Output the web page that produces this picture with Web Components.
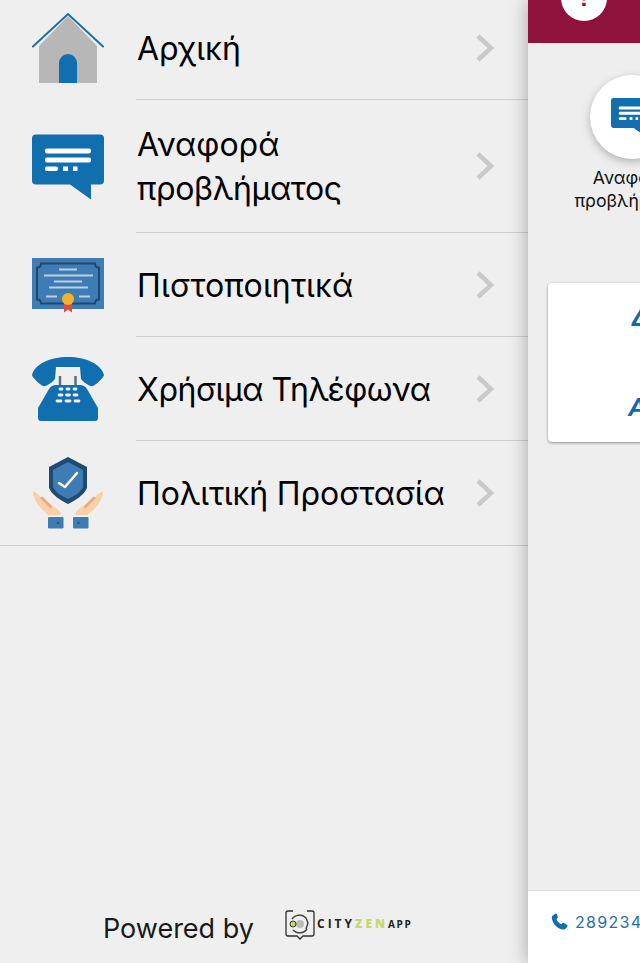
<!DOCTYPE html>
<html lang="el">
<head>
<meta charset="utf-8">
<title>Μενού</title>
<style>
html, body { margin: 0; height: 100%; overflow: hidden; background: #eee; }
body { font-family: Inter, "Liberation Sans", sans-serif; }
</style>
</head>
<body>
<app-shell>
  <side-drawer slot="drawer">
    <menu-item><app-icon slot="icon" name="house"></app-icon>Αρχική</menu-item>
    <menu-item><app-icon slot="icon" name="speech"></app-icon>Αναφορά<br><span style="letter-spacing:-.35px">προβλήματος</span></menu-item>
    <menu-item><app-icon slot="icon" name="cert"></app-icon><span style="letter-spacing:.15px">Πιστοποιητικά</span></menu-item>
    <menu-item><app-icon slot="icon" name="phone"></app-icon><span style="letter-spacing:-.45px">Χρήσιμα Τηλέφωνα</span></menu-item>
    <menu-item full><app-icon slot="icon" name="shield"></app-icon><span style="letter-spacing:-.1px">Πολιτική Προστασία</span></menu-item>
    <powered-by slot="footer"></powered-by>
  </side-drawer>
  <main-panel slot="panel">
    <quick-tile>
      <app-icon slot="icon" name="speech" size="43"></app-icon>
      Αναφορά<br>προβλήματος
    </quick-tile>
    <info-card></info-card>
  </main-panel>
</app-shell>

<script>
"use strict";

// icon viewBoxes are in page pixels, it made them easier to measure off the screenshot
const ICONS = {
  house: `<svg viewBox="32 12 72 72">
    <path fill="#b7b7b7" d="M39 46 68 16l29 30v37H39z"/>
    <path fill="#116eaf" d="M59 83V63a9 9 0 0 1 18 0v20z"/>
    <path fill="none" stroke="#1f6da3" stroke-width="2" stroke-linecap="round" d="M33 46.500 68 14l35 32.500"/>
  </svg>`,
  speech: `<svg viewBox="32 130.500 72 72">
    <path fill="#116eaf" d="M36 134h64a4 4 0 0 1 4 4v42a4 4 0 0 1-4 4h-9v15l-21-15H36a4 4 0 0 1-4-4v-42a4 4 0 0 1 4-4z"/>
    <g fill="#fff">
      <rect x="45" y="148" width="46" height="5" rx="2"/>
      <rect x="45" y="157" width="46" height="5" rx="2"/>
      <rect x="45" y="166" width="13" height="4.500" rx="2"/>
      <rect x="63" y="166" width="5" height="4.500"/>
      <rect x="73" y="166" width="4.500" height="4.500"/>
    </g>
  </svg>`,
  cert: `<svg viewBox="32 248.500 72 72">
    <rect x="32" y="257.500" width="72" height="51" fill="#3f7cb4"/>
    <path fill="none" stroke="#1c4970" stroke-width="2" d="M41 263h54q0 4 4 4v32q-4 0-4 4H41q0-4-4-4v-32q4 0 4-4z"/>
    <g stroke="#b9cfe3" stroke-width="2">
      <path d="M59 269h18M44 275h49M54 281h28M49 287h39M46 296h11M79 296h11"/>
    </g>
    <path fill="#dc4c3f" d="M64 303h8v9l-4-3-4 3z"/>
    <circle cx="68" cy="298.500" r="6" fill="#f6b02c"/>
  </svg>`,
  phone: `<svg viewBox="32 353 72 72">
    <path fill="#116eaf" d="M32 375c3-11 18-18 36-18s33 7 36 18c0 2-7 9-11 11-3 1-10-4-12-7l-1-12H56l-1 12c-2 3-9 8-12 7-4-2-11-9-11-11z"/>
    <path stroke="#5d6f7e" stroke-width="2.500" d="M60 376v10M75.500 376v10"/>
    <path fill="#116eaf" d="M56 385h24c3 0 5 1 7 4l11 19v10c0 2-1 3-3 3H41c-2 0-3-1-3-3v-10l11-19c2-3 4-4 7-4z"/>
    <g stroke="#efefef" stroke-width="2.800" stroke-linecap="round">
      <path d="M60 389h2M67 389h2M74 389h2M59 395h3M66.500 395h3M74 395h3M57 401h4M66 401h4M75 401h4"/>
    </g>
  </svg>`,
  shield: `<svg viewBox="32 457 72 72">
    <path fill="#f8d0a8" d="M33 491c6 3 9 8 14 12 6 3 13 6 14 12H48c-2-3-6-5-8-8-4-5-7-10-7-16zM103 491c-6 3-9 8-14 12-6 3-13 6-14 12h13c2-3 6-5 8-8 4-5 7-10 7-16z"/>
    <path stroke="#eea581" stroke-width="2.500" stroke-linecap="round" d="M42 498l9 9M94 498l-9 9"/>
    <rect x="48" y="517" width="15.500" height="11.500" rx="1" fill="#3f7cb4"/>
    <rect x="73" y="517" width="15.500" height="11.500" rx="1" fill="#3f7cb4"/>
    <circle cx="58" cy="523" r="1" fill="#1c4970"/><circle cx="78.500" cy="523" r="1" fill="#1c4970"/>
    <path fill="#1f4a72" d="M68 457l19 10v21c-3 7-11 12-19 16-8-4-16-9-19-16v-21z"/>
    <path fill="#3f7cb4" d="M68 462l15 8v17c-3 6-9 9-15 12-6-3-12-6-15-12v-17z"/>
    <path fill="none" stroke="#fff" stroke-width="2.500" stroke-linecap="round" stroke-linejoin="round" d="M59 483l6 4 12-14"/>
  </svg>`,
};

class AppIcon extends HTMLElement {
  constructor() {
    super();
    this.attachShadow({ mode: "open" });
  }

  connectedCallback() {
    const size = this.getAttribute("size") || 72;
    this.shadowRoot.innerHTML = `
<style>
:host { display: block; width: ${size}px; height: ${size}px; }
svg { display: block; width: 100%; height: 100%; }
</style>
${ICONS[this.getAttribute("name")] || ""}`;
  }
}
customElements.define("app-icon", AppIcon);

class AppShell extends HTMLElement {
  constructor() {
    super();
    this.attachShadow({ mode: "open" }).innerHTML = `
<style>
:host { display: flex; width: 640px; height: 963px; overflow: hidden; }
::slotted([slot=drawer]) { flex: 0 0 528px; }
::slotted([slot=panel]) { flex: 0 0 112px; }
</style>
<slot name="drawer"></slot>
<slot name="panel"></slot>`;
  }
}
customElements.define("app-shell", AppShell);

class SideDrawer extends HTMLElement {
  constructor() {
    super();
    this.attachShadow({ mode: "open" }).innerHTML = `
<style>
:host { display: flex; flex-direction: column; background: #efefef; height: 963px; overflow: hidden; }
#list { margin-top: -4px; display: flex; flex-direction: column; }
#foot { margin-top: auto; }
</style>
<div id="list"><slot></slot></div>
<div id="foot"><slot name="footer"></slot></div>`;
  }
}
customElements.define("side-drawer", SideDrawer);

class MenuItem extends HTMLElement {
  constructor() {
    super();
    this.attachShadow({ mode: "open" }).innerHTML = `
<style>
:host { display: flex; color: #000; font-size: 32px; line-height: 44px; }
:host([full]) { border-bottom: 1px solid #cfcfcf; }
#icon { flex: 0 0 136px; display: flex; align-items: center; justify-content: center; }
#row { flex: 1; display: flex; align-items: center; min-height: 104px; padding: 23px 0 21px; box-sizing: border-box; border-bottom: 1px solid #cfcfcf; }
:host([full]) #row { border-bottom: 0; }
#label { flex: 1; padding-left: 1px; }
svg { flex: none; width: 20px; height: 30px; margin: -2px 33px 0 0; }
</style>
<div id="icon"><slot name="icon"></slot></div>
<div id="row">
  <div id="label"><slot></slot></div>
  <svg viewBox="0 0 20 30"><path d="M3 3l13 12L3 27" fill="none" stroke="#c9c9c9" stroke-width="4.500"/></svg>
</div>`;
  }
}
customElements.define("menu-item", MenuItem);

class PoweredBy extends HTMLElement {
  constructor() {
    super();
    this.attachShadow({ mode: "open" }).innerHTML = `
<style>
:host { display: flex; align-items: center; height: 76px; padding: 6px 0 0 103px; box-sizing: border-box; }
#by { font-size: 27px; color: #1a1a1a; width: 181px; flex: none; }
#logo { display: flex; align-items: center; margin-top: -6px; }
svg { width: 32px; height: 34px; flex: none; }
#name { font: 700 12px "Open Sans", sans-serif; letter-spacing: 3px; color: #222; margin: 0 0 3px 1px; white-space: nowrap; }
#name b { color: #c6d86c; }
#name small { font-size: 10px; letter-spacing: 1.700px; }
</style>
<span id="by">Powered by</span>
<div id="logo">
  <svg viewBox="0 0 32 34">
    <path fill="none" stroke="#2e2e2e" stroke-width="1.300" d="M9 3H4Q2 3 2 5v21q0 2 2 2h9l3 3 3-3h9q2 0 2-2V5q0-2-2-2h-5"/>
    <path fill="none" stroke="#444" stroke-width="1.500" d="M8 11a9 9 0 0 1 14-1M23 21a9 9 0 0 1-14 1"/>
    <path fill="none" stroke="#444" stroke-width="1.500" d="M22 10l2 5-2 6"/>
    <circle cx="16" cy="16" r="4" fill="#bbb"/>
    <circle cx="9" cy="16" r="3" fill="#c6d86c" stroke="#333" stroke-width="1"/>
  </svg>
  <span id="name">CITY<b>ZEN</b><small>APP</small></span>
</div>`;
  }
}
customElements.define("powered-by", PoweredBy);

class MainPanel extends HTMLElement {
  constructor() {
    super();
    this.attachShadow({ mode: "open" }).innerHTML = `
<style>
:host { display: flex; flex-direction: column; position: relative; background: #eee; height: 963px; box-shadow: 0 0 18px rgba(0,0,0,.32); }
#bar { flex: none; height: 43px; background: #8e123c; overflow: hidden; }
#alert { width: 46px; height: 46px; border-radius: 50%; background: #fff; margin: -25px 0 0 33px; color: #8e123c; font: 700 24px/46px "Liberation Sans", sans-serif; text-align: center; }
#body { flex: 1; overflow: hidden; display: flex; flex-direction: column; }
#foot { flex: none; height: 73px; box-sizing: border-box; background: #fff; border-top: 1px solid #dcdcdc; padding: 20px 0 0 23px; display: flex; align-items: flex-start; gap: 7px; color: #2570a6; font-size: 16px; line-height: 22px; letter-spacing: 1.300px; overflow: hidden; white-space: nowrap; }
#foot svg { flex: none; width: 17px; height: 17px; margin-top: 2px; }
</style>
<div id="bar"><div id="alert">!</div></div>
<div id="body"><slot></slot></div>
<div id="foot">
  <svg viewBox="0 0 24 24"><path fill="#116eaf" d="M6 1 2 4c-1 1-1 3-.5 5 2 7 7 12 13.500 14 2 .5 4 .5 5-.5l3-3c.7-.8.5-1.800-.3-2.400l-4.500-3c-.8-.5-1.700-.4-2.300.2l-1.500 1.500c-3-1.500-5.500-4.300-6.800-7l1.500-1.500c.6-.6.7-1.500.3-2.300L8.500 1.300C8 .5 6.800.3 6 1z"/></svg>
  <span>289234</span>
</div>`;
  }
}
customElements.define("main-panel", MainPanel);

class QuickTile extends HTMLElement {
  constructor() {
    super();
    this.attachShadow({ mode: "open" }).innerHTML = `
<style>
:host { display: flex; flex-direction: column; align-items: center; flex: none; width: 120px; margin: 32px 0 0 44px; color: #111; font-size: 17.700px; line-height: 23px; text-align: center; white-space: nowrap; }
#disc { width: 84px; height: 84px; border-radius: 50%; background: #fff; box-shadow: 0 3px 8px rgba(0,0,0,.25); display: flex; align-items: center; justify-content: center; margin-bottom: 7px; }
</style>
<div id="disc"><slot name="icon"></slot></div>
<div><slot></slot></div>`;
  }
}
customElements.define("quick-tile", QuickTile);

class InfoCard extends HTMLElement {
  constructor() {
    super();
    this.attachShadow({ mode: "open" }).innerHTML = `
<style>
:host { display: flex; flex-direction: column; flex: none; width: 160px; height: 159px; box-sizing: border-box; margin: 71px 0 0 20px; background: #fff; border-radius: 4px; box-shadow: 0 1px 3px rgba(0,0,0,.4); color: #16669f; font: italic 700 26px/30px "Liberation Sans", sans-serif; }
div { padding-left: 84px; }
#a { margin-top: 19px; }
#b { margin-top: 60px; padding-left: 80px; }
</style>
<div id="a">Δ</div>
<div id="b">Α</div>`;
  }
}
customElements.define("info-card", InfoCard);
</script>
</body>
</html>
